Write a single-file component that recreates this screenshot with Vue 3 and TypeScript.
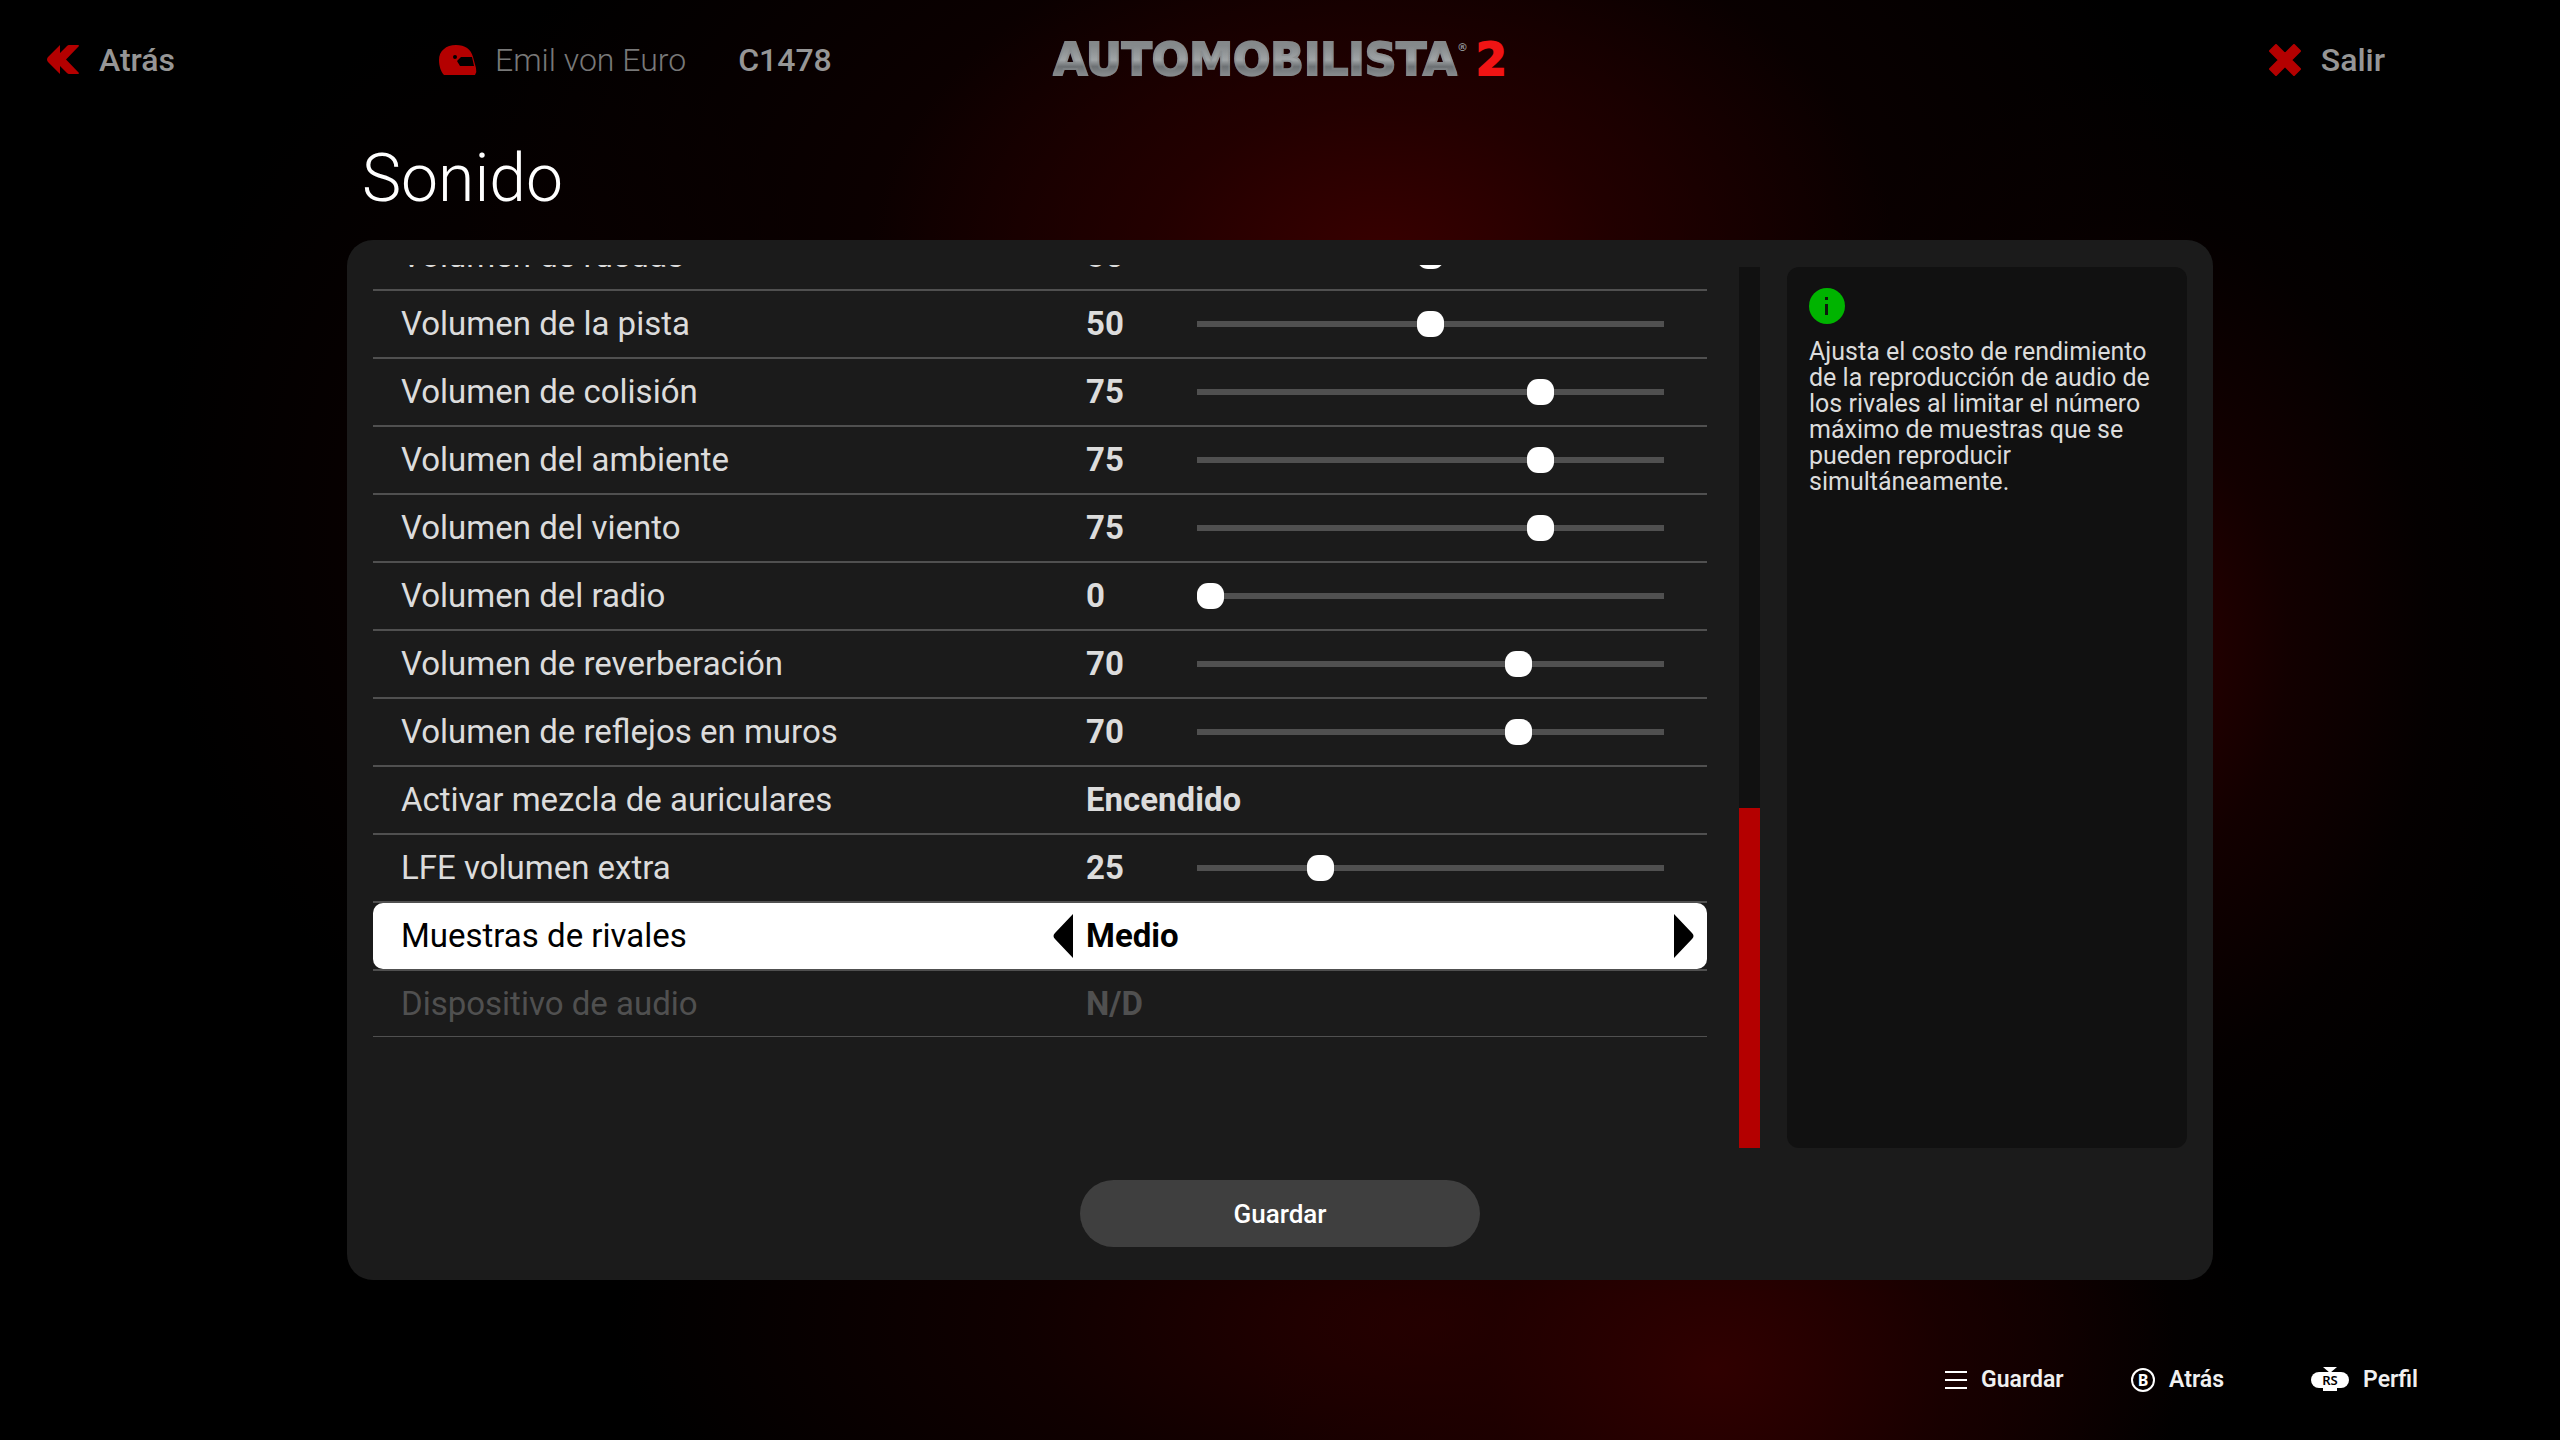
<script setup lang="ts">
import { ref } from 'vue'

interface Setting {
  id: string
  label: string
  kind: 'range' | 'choice'
  value: number | string
  options?: string[]
  disabled?: boolean
  selected?: boolean
}

const range = (id: string, label: string, value: number): Setting => ({ id, label, kind: 'range', value })

const settings = ref<Setting[]>([
  range('ruedas', 'Volumen de ruedas', 50),
  range('pista', 'Volumen de la pista', 50),
  range('colision', 'Volumen de colisión', 75),
  range('ambiente', 'Volumen del ambiente', 75),
  range('viento', 'Volumen del viento', 75),
  range('radio', 'Volumen del radio', 0),
  range('reverberacion', 'Volumen de reverberación', 70),
  range('reflejos', 'Volumen de reflejos en muros', 70),
  { id: 'auriculares', label: 'Activar mezcla de auriculares', kind: 'choice', value: 'Encendido', options: ['Encendido'] },
  range('lfe', 'LFE volumen extra', 25),
  { id: 'rivales', label: 'Muestras de rivales', kind: 'choice', value: 'Medio', options: ['Medio'], selected: true },
  { id: 'dispositivo', label: 'Dispositivo de audio', kind: 'choice', value: 'N/D', options: ['N/D'], disabled: true },
])

function step(setting: Setting, by: number) {
  const options = setting.options ?? []
  const next = options.indexOf(String(setting.value)) + by
  if (options[next]) setting.value = options[next]
}
</script>

<template>
  <div class="page">
    <header class="top">
      <div class="top-left">
        <a class="nav back" href="#atras">
          <svg width="32" height="30" viewBox="0 0 32 30" aria-hidden="true">
            <path fill="#b40000" d="M13 0V8L20 1Q21 0 22 0H31Q32 0 32 1L19 14.500 32 28Q32 29 31 29H22Q21 29 20 28L13 21V29L1 17Q-1 14.500 1 12Z" />
          </svg>
          Atrás
        </a>
        <div class="profile">
          <svg width="38" height="30" viewBox="0 0 38 30" aria-hidden="true">
            <path fill="#b40000" fill-rule="evenodd" d="M5 30C2 27 0 21 0 15C0 6 7 0 17 0C26 0 32 4 34 12L37 23Q38 27 36 30ZM18 16L21 21H35L33 12H22ZM16 10A1.500 1.500 0 1 0 16 14A1.500 1.500 0 1 0 16 10Z" />
          </svg>
          <span class="name">Emil von Euro</span>
          <span class="rating">C1478</span>
        </div>
      </div>
      <div class="logo" role="img" aria-label="Automobilista 2">
        <span class="word">AUTOMOBILISTA</span><sup>®</sup><span class="two">2</span>
      </div>
      <a class="nav exit" href="#salir">
        <svg width="32" height="32" viewBox="0 0 32 32" aria-hidden="true">
          <path fill="#b40000" stroke="#b40000" stroke-width="2" stroke-linejoin="round" d="M7 1L16 10 25 1 31 7 22 16 31 25 25 31 16 22 7 31 1 25 10 16 1 7Z" />
        </svg>
        Salir
      </a>
    </header>

    <main>
      <h1>Sonido</h1>
      <form class="panel" @submit.prevent>
        <div class="body">
          <div class="list">
            <div class="rows">
              <div
                v-for="s in settings"
                :key="s.id"
                class="row"
                :class="{ selected: s.selected, disabled: s.disabled }"
              >
                <label :for="s.id">{{ s.label }}</label>
                <template v-if="s.kind === 'range'">
                  <output class="value" :for="s.id">{{ s.value }}</output>
                  <input :id="s.id" v-model.number="s.value" class="slider" type="range" min="0" max="100" />
                </template>
                <template v-else>
                  <button v-if="s.selected" class="arrow prev" type="button" aria-label="Anterior" @click="step(s, -1)">
                    <svg width="20" height="44" viewBox="0 0 20 44"><path d="M20 0V44L2 25Q-1 22 2 19Z" /></svg>
                  </button>
                  <select :id="s.id" v-model="s.value" class="value choice" :disabled="s.disabled">
                    <option v-for="o in s.options" :key="o">{{ o }}</option>
                  </select>
                  <button v-if="s.selected" class="arrow next" type="button" aria-label="Siguiente" @click="step(s, 1)">
                    <svg width="20" height="44" viewBox="0 0 20 44"><path d="M0 0V44L18 25Q21 22 18 19Z" /></svg>
                  </button>
                </template>
              </div>
            </div>
          </div>
          <div class="scrollbar"><div class="scroll-thumb"></div></div>
          <aside class="info">
            <svg width="36" height="36" viewBox="0 0 36 36" aria-hidden="true">
              <circle cx="18" cy="18" r="18" fill="#00b400" />
              <path fill="#0d1a0d" d="M16 9H19V12H16ZM16 16H19V27H16Z" />
            </svg>
            <p>
              Ajusta el costo de rendimiento de la reproducción de audio de los rivales al limitar el número
              máximo de muestras que se pueden reproducir simultáneamente.
            </p>
          </aside>
        </div>
        <button class="save" type="submit">Guardar</button>
      </form>
    </main>

    <footer>
      <button class="hint" type="button">
        <svg width="22" height="18" viewBox="0 0 22 18" aria-hidden="true"><path fill="#fff" d="M0 0H22V2H0ZM0 8H22V10H0ZM0 16H22V18H0Z" /></svg>
        Guardar
      </button>
      <button class="hint" type="button">
        <span class="key-b">B</span>
        Atrás
      </button>
      <button class="hint" type="button">
        <span class="key-rs">RS</span>
        Perfil
      </button>
    </footer>
  </div>
</template>

<style>
body {
  background: #000;
}
</style>

<style scoped>
.page {
  box-sizing: border-box;
  min-height: 100vh;
  display: flex;
  flex-direction: column;
  color: #dcdcdc;
  font-family: Roboto, 'Liberation Sans', sans-serif;
  background:
    radial-gradient(ellipse 20% 24% at 54% 18%, #380000 0%, #2a0000aa 45%, transparent 100%),
    radial-gradient(ellipse 34% 36% at 52% 16%, #1a0000 0%, #120000aa 50%, transparent 100%),
    radial-gradient(ellipse 18% 26% at 67% 95%, #300000 0%, #200000aa 50%, transparent 100%),
    radial-gradient(ellipse 32% 24% at 56% 92%, #280000 0%, #180000aa 50%, transparent 100%),
    radial-gradient(ellipse 16% 40% at 83% 45%, #300000 0%, #1c0000aa 40%, #0a000066 75%, transparent 100%),
    radial-gradient(ellipse 14% 36% at 20% 36%, #0c0000 0%, transparent 100%),
    #000;
}

.top {
  display: grid;
  grid-template-columns: 1fr auto 1fr;
  align-items: center;
  height: 120px;
  padding: 0 175px 0 47px;
  font-size: 32px;
  font-weight: 500;
  line-height: 40px;
}

.top-left {
  display: flex;
  align-items: center;
}

.nav {
  display: flex;
  align-items: center;
  gap: 20px;
  color: #969696;
  text-decoration: none;
}

.back {
  width: 392px;
}

.exit {
  justify-self: end;
}

.profile {
  display: flex;
  align-items: center;
}

.name {
  margin: 0 52px 0 18px;
  font-weight: 300;
  color: #787878;
}

.rating {
  color: #969696;
}

.logo {
  display: flex;
  align-items: center;
  margin-left: 128px;
  font-family: 'DejaVu Sans', sans-serif;
  font-size: 44px;
  font-weight: 700;
  line-height: 48px;
}

.word {
  color: transparent;
  background: linear-gradient(#85898b 20%, #a0a4a6 50%, #6c7073 64%, #8d9193 85%);
  background-clip: text;
  -webkit-text-stroke: 2px #84888a88;
}

.logo sup {
  align-self: flex-start;
  font-size: 11px;
  line-height: 24px;
  color: #8d9193;
}

.two {
  margin-left: 8px;
  color: #f01414;
  -webkit-text-stroke: 2px #f01414;
}

main {
  flex: 1;
  display: flex;
  flex-direction: column;
  margin: 0 347px;
}

h1 {
  margin: 0;
  height: 120px;
  padding-left: 15px;
  font-size: 66px;
  font-weight: 300;
  line-height: 118px;
  color: #fff;
}

.panel {
  flex: 1;
  display: flex;
  flex-direction: column;
  gap: 32px;
  box-sizing: border-box;
  padding: 27px 26px 33px;
  border-radius: 26px;
  background: #1b1b1b;
}

.body {
  flex: 1;
  display: flex;
}

.list {
  flex: 1;
  margin-top: -2px;
  overflow: hidden;
}

.rows {
  margin-top: -42px;
}

.row {
  display: grid;
  grid-template-columns: 1fr 33px 111px 467px 43px;
  align-items: center;
  height: 66px;
  padding-left: 28px;
  border-bottom: 2px solid #505050;
  font-size: 33px;
  line-height: 40px;
}

.value {
  grid-column: 3;
  font-weight: 700;
}

.choice {
  grid-column: 3 / 5;
  grid-row: 1;
  appearance: none;
  margin: 0;
  padding: 0;
  border: 0;
  background: none;
  color: inherit;
  font: inherit;
  font-weight: 700;
  opacity: 1;
}

.slider {
  grid-column: 4;
  appearance: none;
  width: 100%;
  height: 26px;
  margin: 0;
  background: linear-gradient(#505050, #505050) center / 100% 6px no-repeat;
}

.slider::-webkit-slider-thumb {
  appearance: none;
  width: 27px;
  height: 26px;
  border-radius: 11px;
  background: #fff;
}

.selected {
  position: relative;
  z-index: 0;
  color: #000;
}

.selected::before {
  content: '';
  position: absolute;
  inset: 0;
  z-index: -1;
  border-radius: 10px;
  background: #fff;
}

.disabled {
  height: 65px;
  border-bottom-width: 1px;
  color: #505050;
}

.arrow {
  display: flex;
  grid-row: 1;
  width: 20px;
  padding: 0;
  border: 0;
  background: none;
}

.prev {
  grid-column: 2;
}

.next {
  grid-column: 5;
  margin-left: 10px;
}

.scrollbar {
  display: flex;
  flex-direction: column;
  justify-content: flex-end;
  width: 21px;
  margin: 0 27px 0 32px;
  background: #111;
}

.scroll-thumb {
  height: 340px;
  background: #b40000;
}

.info {
  box-sizing: border-box;
  width: 400px;
  padding: 21px 22px;
  border-radius: 12px;
  background: #111;
}

.info svg {
  display: block;
}

.info p {
  margin: 15px 0 0;
  font-size: 25px;
  line-height: 26px;
}

.save {
  align-self: center;
  width: 400px;
  height: 67px;
  border: 0;
  border-radius: 34px;
  background: #3f3f3f;
  color: #fff;
  font: 500 26px/32px Roboto, 'Liberation Sans', sans-serif;
}

footer {
  display: grid;
  grid-template-columns: 186px 180px auto;
  justify-content: end;
  align-items: center;
  height: 160px;
  box-sizing: border-box;
  padding: 40px 142px 0 0;
}

.hint {
  display: flex;
  align-items: center;
  gap: 14px;
  padding: 0;
  border: 0;
  background: none;
  color: #f0f0f0;
  font: 600 23px/28px Roboto, 'Liberation Sans', sans-serif;
}

.key-b {
  box-sizing: border-box;
  width: 24px;
  height: 24px;
  border: 2px solid #fff;
  border-radius: 50%;
  color: #fff;
  font: 700 16px/20px 'Noto Sans', sans-serif;
  text-align: center;
}

.key-rs {
  position: relative;
  width: 38px;
  height: 16px;
  border-radius: 8px;
  background: #fff;
  color: #000;
  font: 600 13px/16px 'Noto Sans', sans-serif;
  text-align: center;
}

.key-rs::before {
  content: '';
  position: absolute;
  left: 12px;
  top: -5px;
  border: 7px solid transparent;
  border-top: 6px solid #fff;
  border-bottom: 0;
}

.key-rs::after {
  content: '';
  position: absolute;
  left: 12px;
  bottom: -3px;
  width: 14px;
  height: 3px;
  background: #fff;
}
</style>
